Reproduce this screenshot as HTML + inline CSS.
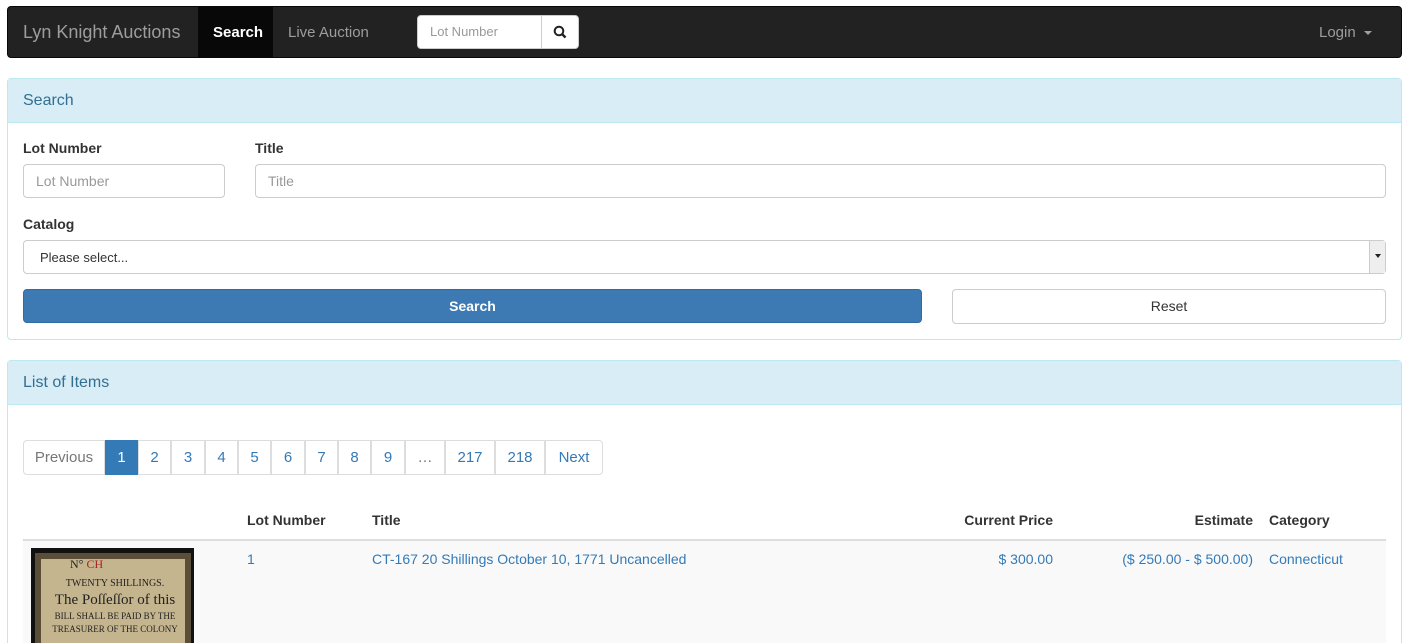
<!DOCTYPE html>
<html><head><meta charset="utf-8"><style>
*{box-sizing:border-box;margin:0;padding:0}
html,body{width:1403px;height:643px;overflow:hidden}
body{background:#fff;font-family:"Liberation Sans",sans-serif;font-size:14px;color:#333;position:relative}
.a{position:absolute}
.nav{left:7px;top:6px;width:1395px;height:52px;background:#222;border:1px solid #080808;border-radius:4px}
.panel{left:7px;width:1395px;border:1px solid #bce8f1;border-radius:4px;background:#fff}
.ph{height:44px;background:#d9edf7;border-bottom:1px solid #bce8f1;color:#31708f;font-size:16px;padding:13px 15px}
.inp{border:1px solid #ccc;border-radius:4px;background:#fff;color:#999;font-size:14px;padding:8px 12px;height:34px}
.lbl{font-weight:bold;font-size:14px;color:#333}
.pg{top:440px;height:35px;border:1px solid #ddd;color:#337ab7;font-size:15px;text-align:center;line-height:33px;margin-left:-1px}
.th{top:512px;font-weight:bold;font-size:14px}
.td{top:551px;color:#337ab7;font-size:14px}
</style></head><body>
<div class="a nav"></div>
<div class="a" style="left:23px;top:22px;color:#9d9d9d;font-size:18px">Lyn Knight Auctions</div>
<div class="a" style="left:198px;top:7px;width:75px;height:50px;background:#080808"></div>
<div class="a" style="left:213px;top:24px;color:#fff;font-size:15px;font-weight:bold">Search</div>
<div class="a" style="left:288px;top:24px;color:#9d9d9d;font-size:15px">Live Auction</div>
<div class="a inp" style="left:417px;top:15px;width:125px;height:34px;border-radius:4px 0 0 4px;font-size:13px">Lot Number</div>
<div class="a" style="left:541px;top:15px;width:38px;height:34px;background:#fff;border:1px solid #ccc;border-radius:0 4px 4px 0">
<svg width="36" height="32" viewBox="0 0 36 32"><circle cx="17" cy="15" r="4.3" fill="none" stroke="#222" stroke-width="2"/><path d="M20 18l3.5 3.5" stroke="#222" stroke-width="2.4"/></svg></div>
<div class="a" style="left:1319px;top:24px;color:#9d9d9d;font-size:15px">Login <span style="display:inline-block;border-top:4px solid #9d9d9d;border-left:4px solid transparent;border-right:4px solid transparent;vertical-align:middle;margin-left:4px"></span></div>

<div class="a panel" style="top:78px;height:262px"><div class="ph">Search</div></div>
<div class="a lbl" style="left:23px;top:140px">Lot Number</div>
<div class="a lbl" style="left:255px;top:140px">Title</div>
<div class="a inp" style="left:23px;top:164px;width:202px">Lot Number</div>
<div class="a inp" style="left:255px;top:164px;width:1131px">Title</div>
<div class="a lbl" style="left:23px;top:216px">Catalog</div>
<div class="a inp" style="left:23px;top:240px;width:1363px;color:#333;font-size:13px;padding-left:16px;padding-top:9px">Please select...</div>
<div class="a" style="left:1369px;top:241px;width:16px;height:32px;background:#eee;border-left:1px solid #ccc"><div style="margin:13px 0 0 5px;border-top:4px solid #222;border-left:3px solid transparent;border-right:3px solid transparent;width:0"></div></div>
<div class="a" style="left:23px;top:289px;width:899px;height:34px;background:#3d7ab4;border:1px solid #2e6da4;border-radius:4px;color:#fff;font-weight:bold;text-align:center;line-height:32px;font-size:14px">Search</div>
<div class="a" style="left:952px;top:289px;width:434px;height:35px;border:1px solid #ccc;border-radius:4px;text-align:center;line-height:33px;font-size:14px;color:#333">Reset</div>

<div class="a panel" style="top:360px;height:300px"><div class="ph">List of Items</div></div>
<div class="a pg" style="left:24px;width:82px;color:#777;border-radius:4px 0 0 4px">Previous</div>
<div class="a pg" style="left:106px;width:33px;background:#337ab7;border-color:#337ab7;color:#fff">1</div>
<div class="a pg" style="left:139px;width:33px">2</div>
<div class="a pg" style="left:172px;width:34px">3</div>
<div class="a pg" style="left:206px;width:33px">4</div>
<div class="a pg" style="left:239px;width:33px">5</div>
<div class="a pg" style="left:272px;width:34px">6</div>
<div class="a pg" style="left:306px;width:33px">7</div>
<div class="a pg" style="left:339px;width:33px">8</div>
<div class="a pg" style="left:372px;width:34px">9</div>
<div class="a pg" style="left:406px;width:40px;color:#777">…</div>
<div class="a pg" style="left:446px;width:50px">217</div>
<div class="a pg" style="left:496px;width:50px">218</div>
<div class="a pg" style="left:546px;width:58px;border-radius:0 4px 4px 0">Next</div>

<div class="a th" style="left:247px">Lot Number</div>
<div class="a th" style="left:372px">Title</div>
<div class="a th" style="left:900px;width:153px;text-align:right">Current Price</div>
<div class="a th" style="left:1100px;width:153px;text-align:right">Estimate</div>
<div class="a th" style="left:1269px">Category</div>
<div class="a" style="left:23px;top:539px;width:1363px;height:2px;background:#ddd"></div>
<div class="a" style="left:23px;top:541px;width:1363px;height:102px;background:#f9f9f9"></div>
<div class="a" style="left:31px;top:548px;width:163px;height:95px;background:#111"></div>
<div class="a" style="left:35px;top:553px;width:156px;height:90px;background:#c4b58f;border:6px solid #5a4e38;border-bottom:none"></div>
<div class="a" style="left:70px;top:557px;width:70px;height:12px;color:#222;font-family:'Liberation Serif',serif;font-size:12px">N° <span style="color:#a22">CH</span></div>
<div class="a" style="left:43px;top:577px;width:144px;font-family:'Liberation Serif',serif;font-size:10px;color:#222;text-align:center;line-height:13px">TWENTY SHILLINGS.<br><span style="font-size:15px;line-height:20px">The Poſſeſſor of this</span><br><span style="font-size:9px">BILL SHALL BE PAID BY THE<br>TREASURER OF THE COLONY</span></div>
<div class="a td" style="left:247px">1</div>
<div class="a td" style="left:372px">CT-167 20 Shillings October 10, 1771 Uncancelled</div>
<div class="a td" style="left:900px;width:153px;text-align:right">$ 300.00</div>
<div class="a td" style="left:1053px;width:200px;text-align:right">($ 250.00 - $ 500.00)</div>
<div class="a td" style="left:1269px">Connecticut</div>
</body></html>
